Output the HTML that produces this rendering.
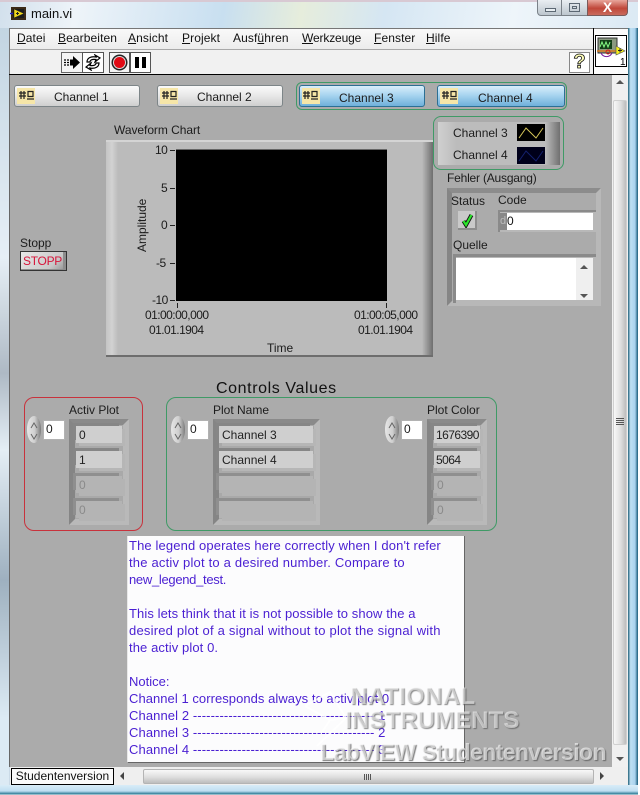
<!DOCTYPE html>
<html><head><meta charset="utf-8"><style>
html,body{margin:0;padding:0;width:640px;height:795px;overflow:hidden;background:#fff}
body{position:relative;font-family:"Liberation Sans",sans-serif;font-size:12px;color:#1c1c1c}
div,span.a{position:absolute;box-sizing:border-box}
.t{position:absolute;white-space:nowrap;line-height:14px;letter-spacing:0}
.n{letter-spacing:-.55px}
.m{top:31px;font-size:12px;color:#111;letter-spacing:.1px}
.m u{text-decoration:underline}
.btn{height:22px;top:85px;border:1px solid #7d8588;border-radius:3px;background:linear-gradient(#fafafa,#e9e9e9 45%,#cfcfcf);}
.btn.on{border-color:#2c6f94;background:linear-gradient(#d9eefa,#a9d5f0 45%,#6fb0da)}
.ic{position:absolute;left:2px;top:2px;width:18px;height:16px;background:#f6e6a8}
.arr{background:#a9a9a9;border:6px solid;border-color:#8a8a8a #b9b9b9 #b9b9b9 #858585;top:419px;height:106px}
.cell{background:#cfcfcf;height:17px;box-shadow:-3px -3px 0 #868686,3px 3px 0 #b6b6b6;padding-left:3px;line-height:18px;color:#222}
.cell.d{background:#b4b4b4;color:#8a8a8a;box-shadow:-3px -3px 0 #8f8f8f,3px 3px 0 #b4b4b4}
.inc{width:14px;height:27px;top:416px;border-radius:7px/13px;background:linear-gradient(90deg,#e6e6e6,#cfcfcf 55%,#7c7c7c)}
.num{width:20px;height:18px;top:421px;background:#fff;padding-left:2px;line-height:17px;box-shadow:0 0 0 1px #b2b2b2}
.f{position:absolute;left:129px;font-size:13px;line-height:17px;color:#4a1fd2;white-space:pre}
</style></head><body>

<!-- window chrome -->
<div style="left:0;top:0;width:640px;height:795px;background:linear-gradient(90deg,#c9d9e6,#f2f7fb 30%,#cfe3f2 60%,#e9f2f9 85%,#d6e8f4)"></div>
<div style="left:0;top:0;width:640px;height:28px;background:linear-gradient(100deg,#d2e0ec 0,#eef4f9 12%,#c8dff0 35%,#e6eddc 47%,#d5e6f3 60%,#eef5fa 80%,#dbe9f4 100%)"></div>
<div style="left:0;top:0;width:640px;height:2px;background:#d8c9d3"></div>
<div style="left:0;top:28px;width:9px;height:767px;background:linear-gradient(#c3d5e2,#e6eff6 30%,#aeb9c4 45%,#e4eef5 55%,#9eb0bf 72%,#dceaf4 90%)"></div>
<div style="left:628px;top:28px;width:10px;height:767px;background:linear-gradient(90deg,#1e5f78 0,#bfe0f3 25%,#a9d2ee 70%,#2a6a88 95%)"></div>
<div style="left:638px;top:0;width:2px;height:795px;background:#fff"></div>
<div style="left:0;top:785px;width:638px;height:10px;background:linear-gradient(#d9ecf8,#bfdff2 60%,#2e7c95 90%,#fff)"></div>

<!-- title bar -->
<svg style="position:absolute;left:10px;top:6px" width="17" height="15" viewBox="0 0 17 15"><rect x="1" y="1" width="15" height="13" fill="#3a2a18"/><rect x="3" y="3" width="11" height="9" fill="#1c1c1c"/><path d="M4 3 L14 7.500 L4 12Z" fill="#f1d81c" stroke="#222" stroke-width=".5"/><path d="M0 7.500H3" stroke="#22c" stroke-width="1.400"/><path d="M6 7.500H9M7.500 6V9" stroke="#222"/></svg>
<span class="t" style="left:31px;top:7px;font-size:13px;color:#111">main.vi</span>
<div style="left:537px;top:0;width:25px;height:16px;background:linear-gradient(#e9eef2,#bcc6ce);border:1px solid #7a8188;border-top:0;border-radius:0 0 0 4px"><div style="left:7px;top:8px;width:11px;height:4px;border:1px solid #5c6873;background:#e8eef2"></div></div>
<div style="left:562px;top:0;width:25px;height:16px;background:linear-gradient(#e9eef2,#bcc6ce);border-bottom:1px solid #7a8188"><div style="left:7px;top:3px;width:11px;height:9px;border:1px solid #5c6873"></div><div style="left:10px;top:6px;width:5px;height:3px;border:1px solid #5c6873"></div></div>
<div style="left:587px;top:0;width:41px;height:16px;background:linear-gradient(#e8a69c,#c0473a 55%,#c96a5c);border:1px solid #7a5a5a;border-top:0;border-radius:0 0 4px 0;color:#fff;text-align:center;line-height:15px;font-weight:bold;font-size:14px">X</div>

<!-- menu + toolbar -->
<div style="left:9px;top:28px;width:619px;height:47px;background:#fbfbfb;border-top:1px solid #777;border-left:1px solid #777"></div>
<div style="left:10px;top:29px;width:583px;height:20px;background:linear-gradient(#f9f9f9,#ececec)"></div>
<div style="left:10px;top:49px;width:583px;height:1px;background:#a8a8a8"></div>
<div style="left:10px;top:50px;width:583px;height:24px;background:#f1f1f1"></div>
<div style="left:9px;top:74px;width:619px;height:1px;background:#000"></div>
<div style="left:593px;top:28px;width:1px;height:47px;background:#000"></div>
<span class="t m" style="left:17px"><u>D</u>atei</span>
<span class="t m" style="left:58px"><u>B</u>earbeiten</span>
<span class="t m" style="left:128px"><u>A</u>nsicht</span>
<span class="t m" style="left:182px"><u>P</u>rojekt</span>
<span class="t m" style="left:233px">Ausf<u>ü</u>hren</span>
<span class="t m" style="left:302px;letter-spacing:-.15px"><u>W</u>erkzeuge</span>
<span class="t m" style="left:374px"><u>F</u>enster</span>
<span class="t m" style="left:426px"><u>H</u>ilfe</span>

<div style="left:61px;top:52px;width:43px;height:21px;background:#f4f4f4;border:1px solid #666"></div>
<div style="left:82px;top:52px;width:22px;height:21px;background:#fff;border:1px solid #555"></div>
<svg style="position:absolute;left:62px;top:53px" width="20" height="19"><path d="M2 7H4M2 9.500H4M2 12H4M5 7H7M5 9.500H7M5 12H7" stroke="#000" stroke-width="1.200"/><path d="M8 6.500h3V3l7 6.500-7 6.500v-3.500H8z" fill="#000"/></svg>
<svg style="position:absolute;left:84px;top:54px" width="18" height="17" fill="none" stroke="#000" stroke-width="1.200"><path d="M3 8C3 4 7 2 12 3L11 1 16 4 11 8 12 5.500C8 5 6 6 6 8L3 8Z"/><path d="M15 9C15 13 11 15 6 14L7 16 2 13 7 9 6 11.500C10 12 12 11 12 9L15 9Z"/></svg>
<div style="left:109px;top:52px;width:21px;height:21px;background:#f4f4f4;border:1px solid #555"></div>
<div style="left:130px;top:52px;width:21px;height:21px;background:#fff;border:1px solid #555"></div>
<svg style="position:absolute;left:110px;top:53px" width="19" height="19"><circle cx="9.500" cy="9.500" r="8" fill="#222"/><circle cx="9.500" cy="9.500" r="6.500" fill="#ddd"/><circle cx="9.500" cy="9.500" r="5.500" fill="#e00a14"/></svg>
<div style="left:135px;top:57px;width:4px;height:11px;background:#000"></div>
<div style="left:142px;top:57px;width:4px;height:11px;background:#000"></div>

<div style="left:569px;top:52px;width:21px;height:21px;background:#fff;border:1px solid #888;color:#ffffb8;font:bold 20px 'Liberation Sans',sans-serif;line-height:19px;text-align:center;-webkit-text-stroke:.8px #111">?</div>

<div style="left:595px;top:35px;width:32px;height:32px;background:#fff;border:1px solid #000"></div>
<svg style="position:absolute;left:597px;top:37px" width="30" height="30"><rect x="1" y="1" width="19" height="15" fill="#8a9a80" stroke="#333"/><rect x="3" y="3" width="12" height="9" fill="#124018"/><path d="M3 10l2-5 2 5 2-5 2 5 2-5" stroke="#8f8" fill="none"/><path d="M4 16a6 6 0 0 0 11 0" stroke="#7a1fa0" fill="none"/><path d="M0 14H22" stroke="#d97a20" stroke-width="1.500"/><circle cx="11" cy="15" r="2" fill="none" stroke="#c22"/><path d="M19 9L28 14 19 18Z" fill="#f5ef1a" stroke="#555" stroke-width=".6"/><path d="M21 13.500h4M23 11.500v4" stroke="#222"/><text x="23" y="28" font-family="Liberation Sans,sans-serif" font-size="10" fill="#000">1</text></svg>

<!-- front panel -->
<div style="left:9px;top:75px;width:603px;height:692px;background:#ababab;border-left:1px solid #666"></div>

<!-- right scrollbar -->
<div style="left:612px;top:75px;width:16px;height:692px;background:#f0f0f0"></div>
<div style="left:613px;top:100px;width:14px;height:645px;background:linear-gradient(90deg,#f8f8f8,#dfdfdf 55%,#bdbdbd);border-radius:2px;border:1px solid #d0d0d0"></div>
<div style="left:616px;top:418px;width:8px;height:1px;background:#555;box-shadow:0 2px 0 #555,0 4px 0 #555,0 6px 0 #555"></div>
<div style="left:616px;top:80px;width:0;height:0;border:4px solid transparent;border-bottom:4px solid #555;border-top:0"></div>
<div style="left:616px;top:757px;width:0;height:0;border:4px solid transparent;border-top:4px solid #555;border-bottom:0"></div>

<!-- bottom scrollbar -->
<div style="left:10px;top:767px;width:618px;height:18px;background:#efefef"></div>
<div style="left:11px;top:768px;width:103px;height:17px;background:#fafafa;border:1px solid #000;text-align:center;line-height:15px;font-size:12px;color:#111">Studentenversion</div>
<div style="left:120px;top:772px;width:0;height:0;border:4px solid transparent;border-right:4px solid #444;border-left:0"></div>
<div style="left:143px;top:769px;width:451px;height:15px;background:linear-gradient(#f8f8f8,#dedede 55%,#bdbdbd);border:1px solid #b4b4b4;border-radius:2px"></div>
<div style="left:364px;top:774px;width:1px;height:6px;background:#555;box-shadow:2px 0 0 #555,4px 0 0 #555,6px 0 0 #555"></div>
<div style="left:600px;top:772px;width:0;height:0;border:4px solid transparent;border-left:4px solid #444;border-right:0"></div>

<!-- channel buttons -->
<div style="left:296px;top:82px;width:271px;height:28px;border:1px solid #3f9a66;border-radius:6px"></div>
<div class="btn" style="left:14px;width:126px"><div class="ic"></div></div>
<div class="btn" style="left:157px;width:126px"><div class="ic"></div></div>
<div class="btn on" style="left:299px;width:126px"><div class="ic"></div></div>
<div class="btn on" style="left:437px;width:128px"><div class="ic"></div></div>
<svg style="position:absolute;left:0;top:0" width="640" height="110"><g fill="none" stroke="#222" stroke-width="1.200"><path d="M19 93h7M19 96h7M21 91v8M24 91v8M28 91.500h5v5h-5zM27 99h7"/><path transform="translate(143 0)" d="M19 93h7M19 96h7M21 91v8M24 91v8M28 91.500h5v5h-5zM27 99h7"/><path transform="translate(284 0)" d="M19 93h7M19 96h7M21 91v8M24 91v8M28 91.500h5v5h-5zM27 99h7"/><path transform="translate(423 0)" d="M19 93h7M19 96h7M21 91v8M24 91v8M28 91.500h5v5h-5zM27 99h7"/></g></svg>
<span class="t" style="left:54px;top:90px">Channel 1</span>
<span class="t" style="left:197px;top:90px">Channel 2</span>
<span class="t" style="left:339px;top:91px">Channel 3</span>
<span class="t" style="left:478px;top:91px">Channel 4</span>

<!-- legend -->
<div style="left:433px;top:116px;width:131px;height:54px;border:1px solid #3f9a66;border-radius:8px"></div>
<div style="left:438px;top:122px;width:122px;height:43px;background:linear-gradient(90deg,#d0d0d0,#bcbcbc 15%,#bcbcbc 88%,#707070)"></div>
<span class="t" style="left:453px;top:126px">Channel 3</span>
<span class="t" style="left:453px;top:148px">Channel 4</span>
<svg style="position:absolute;left:517px;top:124px" width="28" height="40"><rect width="28" height="17" fill="#000"/><rect y="23" width="28" height="17" fill="#00001a"/><path d="M2 14 9 4 19 14 26 4" stroke="#d8c85a" fill="none"/><path d="M2 37 9 27 19 37 26 27" stroke="#14206e" fill="none"/></svg>

<!-- chart -->
<span class="t" style="left:114px;top:123px;letter-spacing:-.05px">Waveform Chart</span>
<div style="left:106px;top:140px;width:327px;height:217px;background:#bbb;border-top:2px solid #d4d4d4;border-bottom:2px solid #6d6d6d"></div>
<div style="left:106px;top:142px;width:12px;height:213px;background:linear-gradient(90deg,#c4c4c4,#d2d2d2 50%,#bbb)"></div>
<div style="left:422px;top:142px;width:11px;height:213px;background:linear-gradient(90deg,#bbb,#6e6e6e)"></div>
<div style="left:176px;top:149px;width:211px;height:152px;background:#000;border-top:1px solid #666"></div>
<span class="t n" style="left:155px;top:143px">10</span>
<span class="t n" style="left:161px;top:181px">5</span>
<span class="t n" style="left:161px;top:218px">0</span>
<span class="t n" style="left:156px;top:256px">-5</span>
<span class="t n" style="left:152px;top:293px">-10</span>
<svg style="position:absolute;left:0;top:0" width="440" height="320"><path d="M170 150.500H175M170 188.500H175M170 225.500H175M170 263.500H175M170 300.500H175M177.500 303V308M386.500 303V308" stroke="#222"/></svg>
<span class="t" style="left:135px;top:197px;width:14px;height:56px;writing-mode:vertical-rl;transform:rotate(180deg);text-align:center;line-height:14px">Amplitude</span>
<span class="t n" style="left:145px;top:308px">01:00:00,000</span>
<span class="t n" style="left:149px;top:323px">01.01.1904</span>
<span class="t n" style="left:354px;top:308px">01:00:05,000</span>
<span class="t n" style="left:358px;top:323px">01.01.1904</span>
<span class="t" style="left:267px;top:341px">Time</span>

<!-- stop -->
<span class="t" style="left:20px;top:236px">Stopp</span>
<div style="left:20px;top:251px;width:47px;height:20px;border:1px solid #333;background:linear-gradient(135deg,#e8e8e8,#c9c9c9 70%,#8f8f8f);color:#d8143a;text-align:center;line-height:18px;letter-spacing:-.3px;padding-right:2px;box-shadow:inset -3px -1px 0 #8d8d8d">STOPP</div>

<!-- error cluster -->
<span class="t" style="left:447px;top:171px;letter-spacing:-.2px">Fehler (Ausgang)</span>
<div style="left:447px;top:188px;width:154px;height:118px;border:5px solid;border-color:#8c8c8c #b8b8b8 #b8b8b8 #858585;background:#ababab"></div>
<span class="t" style="left:451px;top:194px">Status</span>
<span class="t" style="left:498px;top:193px">Code</span>
<div style="left:458px;top:211px;width:19px;height:19px;background:#c9c9c9;border-right:2px solid #8d8d8d;border-bottom:2px solid #8d8d8d"></div>
<svg style="position:absolute;left:460px;top:212px" width="15" height="16" fill="none"><path d="M3.500 9 6 13 11.500 3" stroke="#111" stroke-width="4"/><path d="M3.500 9 6 13 11.500 3" stroke="#2be62b" stroke-width="2.200"/></svg>
<div style="left:498px;top:210px;width:98px;height:22px;background:#b8b8b8;box-shadow:inset 2px 2px 0 #8a8a8a"></div>
<div style="left:500px;top:213px;width:7px;height:17px;background:#888;color:#bbb;line-height:17px;font-size:11px">d</div>
<div style="left:507px;top:213px;width:86px;height:17px;background:#fff;line-height:17px;color:#111">0</div>
<span class="t" style="left:453px;top:238px">Quelle</span>
<div style="left:453px;top:254px;width:143px;height:49px;background:#b8b8b8;box-shadow:inset 3px 3px 0 #8a8a8a"></div>
<div style="left:456px;top:258px;width:120px;height:42px;background:#fff"></div>
<div style="left:576px;top:258px;width:17px;height:42px;background:#efefef"></div>
<div style="left:580px;top:265px;width:0;height:0;border:4px solid transparent;border-bottom:4px solid #555;border-top:0"></div>
<div style="left:580px;top:294px;width:0;height:0;border:4px solid transparent;border-top:4px solid #555;border-bottom:0"></div>

<!-- controls values -->
<span class="t" style="left:216px;top:380px;font-size:16px;line-height:18px;letter-spacing:.6px;color:#111">Controls Values</span>
<div style="left:24px;top:397px;width:119px;height:134px;border:1px solid #c8323c;border-radius:10px"></div>
<div style="left:166px;top:397px;width:331px;height:134px;border:1px solid #3f9a66;border-radius:10px"></div>
<span class="t" style="left:69px;top:403px">Activ Plot</span>
<span class="t" style="left:213px;top:403px">Plot Name</span>
<span class="t" style="left:427px;top:403px">Plot Color</span>

<div class="inc" style="left:27px"></div><div class="num" style="left:44px">0</div>
<div class="inc" style="left:171px"></div><div class="num" style="left:188px">0</div>
<div class="inc" style="left:385px"></div><div class="num" style="left:402px">0</div>
<svg style="position:absolute;left:0;top:410px" width="420" height="36" fill="none" stroke="#666"><path d="M31 18 34 13 37 18M31 24 34 29 37 24M175 18 178 13 181 18M175 24 178 29 181 24M389 18 392 13 395 18M389 24 392 29 395 24"/></svg>

<div class="arr" style="left:69px;width:60px"></div>
<div class="cell" style="left:76px;top:426px;width:46px">0</div>
<div class="cell" style="left:76px;top:451px;width:46px">1</div>
<div class="cell d" style="left:76px;top:476px;width:46px">0</div>
<div class="cell d" style="left:76px;top:501px;width:46px">0</div>

<div class="arr" style="left:213px;width:107px"></div>
<div class="cell" style="left:219px;top:426px;width:94px">Channel 3</div>
<div class="cell" style="left:219px;top:451px;width:94px">Channel 4</div>
<div class="cell d" style="left:219px;top:476px;width:94px"></div>
<div class="cell d" style="left:219px;top:501px;width:94px"></div>

<div class="arr" style="left:427px;width:60px"></div>
<div class="cell n" style="left:434px;top:426px;width:46px;padding-left:2px">1676390</div>
<div class="cell n" style="left:434px;top:451px;width:46px;padding-left:2px">5064</div>
<div class="cell d" style="left:434px;top:476px;width:46px">0</div>
<div class="cell d" style="left:434px;top:501px;width:46px">0</div>

<!-- free label -->
<div style="left:127px;top:536px;width:338px;height:227px;background:#fcfcfd;border-left:1px solid #e8e8e8;border-right:1px solid #666;border-bottom:1px solid #666"></div>
<span class="f" style="top:537px;letter-spacing:.125px">The legend operates here correctly when I don't refer</span>
<span class="f" style="top:554px;letter-spacing:.2px">the activ plot to a desired number. Compare to</span>
<span class="f" style="top:571px;letter-spacing:-.3px">new_legend_test.</span>
<span class="f" style="top:605px;letter-spacing:.09px">This lets think that it is not possible to show the a</span>
<span class="f" style="top:622px;letter-spacing:.21px">desired plot of a signal without to plot the signal with</span>
<span class="f" style="top:639px;letter-spacing:.1px">the activ plot 0.</span>
<span class="f" style="top:673px">Notice:</span>
<span class="f" style="top:690px;letter-spacing:.05px">Channel 1 corresponds always to activ plot 0</span>
<span class="f" style="top:707px;letter-spacing:.1px">Channel 2 ----------------------------------------- 1</span>
<span class="f" style="top:724px;letter-spacing:.1px">Channel 3 ----------------------------------------- 2</span>
<span class="f" style="top:741px;letter-spacing:.1px">Channel 4 ----------------------------------------- 3</span>

<!-- watermark -->
<svg style="position:absolute;left:300px;top:684px" width="70" height="70" fill="none" stroke="#fff" stroke-opacity=".8" stroke-width="2"><path d="M5 22 30 8 46 34 17 62M5 22 30 36 46 34M30 36 22 48"/></svg>
<span class="t" style="left:350px;top:684px;font-size:24px;line-height:26px;font-weight:bold;letter-spacing:.4px;color:rgba(255,255,255,.55);text-shadow:1px 1px 1px rgba(90,90,90,.7)">NATIONAL</span>
<span class="t" style="left:345px;top:708px;font-size:24px;line-height:26px;font-weight:bold;letter-spacing:.1px;color:rgba(255,255,255,.55);text-shadow:1px 1px 1px rgba(90,90,90,.7)">INSTRUMENTS</span>
<span class="t" style="left:320px;top:740px;font-size:23px;line-height:25px;font-weight:bold;letter-spacing:-.6px;color:rgba(255,255,255,.6);text-shadow:1px 1px 1px rgba(90,90,90,.8)">LabVIEW Studentenversion</span>

</body></html>
